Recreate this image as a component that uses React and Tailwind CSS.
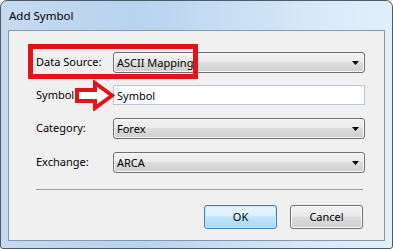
import { useState } from "react";

const Combo = ({ value }) => (
  <div className="relative h-[21px] w-[252px] rounded-[3px] border border-[#707070] bg-[linear-gradient(180deg,#f3f3f3_0%,#ebebeb_45%,#dddddd_50%,#cfcfcf_100%)] shadow-[inset_0_0_0_1px_#f8f8f8]">
    <span className="absolute left-[3px] top-[1px] text-[11px] leading-[17px] text-black">
      {value}
    </span>
    <svg
      className="absolute right-[5px] top-[8px]"
      width="7"
      height="4"
      viewBox="0 0 7 4"
    >
      <polygon points="0,0 7,0 3.5,4" fill="#000" />
    </svg>
  </div>
);

const Row = ({ label, children, className = "" }) => (
  <div className={`flex items-center ${className}`}>
    <span className="w-[77px] text-[11px] text-black">{label}</span>
    {children}
  </div>
);

export default function App() {
  const [symbol, setSymbol] = useState("Symbol");

  return (
    <div className="relative flex h-[249px] w-[393px] flex-col overflow-hidden rounded-t-[7px] rounded-b-[3px] border border-[#4d5a68] bg-[linear-gradient(90deg,#c6daef_0%,#b7d3ef_35%,#c9dff5_60%,#dcebf9_85%,#e2eefa_100%)] font-['Noto_Sans',sans-serif]">
      <div className="flex h-[29px] items-center pl-[8px] text-[11.5px] text-black">
        Add Symbol
      </div>

      <div className="mx-[7px] mb-[7px] flex flex-1 flex-col border border-[#8397b0] bg-[#f0f0f0] pl-[27px] pr-[19px] pt-[21px]">
        <Row label="Data Source:">
          <Combo value="ASCII Mapping" />
        </Row>

        <Row label="Symbol:" className="mt-[12px]">
          <input
            value={symbol}
            onChange={(e) => setSymbol(e.target.value)}
            className="h-[20px] w-[252px] border border-[#b7c5d6] bg-white px-[3px] text-[11px] text-black outline-none"
          />
        </Row>

        <Row label="Category:" className="mt-[13px]">
          <Combo value="Forex" />
        </Row>

        <Row label="Exchange:" className="mt-[13px]">
          <Combo value="ARCA" />
        </Row>

        <div className="mr-[2px] mt-[16px] h-[2px] border-t border-[#a0a0a0] border-b-white" />

        <div className="mr-[2px] mt-[14px] flex justify-end gap-[13px]">
          <button className="h-[24px] w-[73px] rounded-[3px] border border-[#3c7fb1] bg-[linear-gradient(180deg,#eaf6fd_0%,#d9f0fc_45%,#bee6fd_50%,#a7d9f5_100%)] text-[11px] text-black shadow-[inset_0_0_0_1px_#c8ecfb]">
            OK
          </button>
          <button className="h-[24px] w-[73px] rounded-[3px] border border-[#707070] bg-[linear-gradient(180deg,#f2f2f2_0%,#ebebeb_45%,#dddddd_50%,#cfcfcf_100%)] text-[11px] text-black shadow-[inset_0_0_0_1px_#fbfbfb]">
            Cancel
          </button>
        </div>
      </div>

      {/* red annotation box */}
      <div className="pointer-events-none absolute left-[27px] top-[43px] h-[35px] w-[170px] border-[5px] border-[#e3131b]" />

      {/* red annotation arrow */}
      <svg
        className="pointer-events-none absolute left-[73px] top-[79px]"
        width="42"
        height="31"
        viewBox="0 0 42 31"
      >
        <polygon
          points="3,10 21,10 21,3 38,15.5 21,28 21,21 3,21"
          fill="#fff"
          stroke="#e3131b"
          strokeWidth="4"
          strokeLinejoin="miter"
        />
      </svg>
    </div>
  );
}
